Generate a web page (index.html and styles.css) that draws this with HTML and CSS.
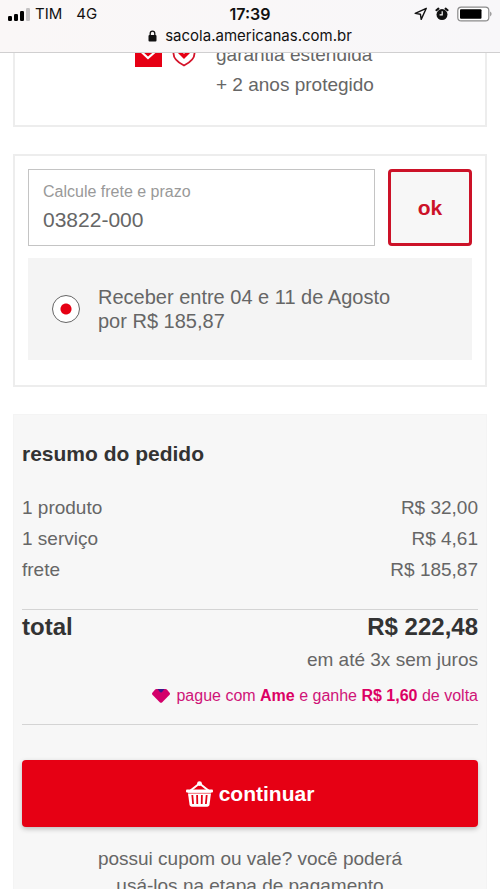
FILE: index.html
```html
<!DOCTYPE html>
<html lang="pt-BR">
<head>
<meta charset="utf-8">
<meta name="viewport" content="width=device-width, initial-scale=1">
<title>Sacola - Americanas</title>
<link rel="stylesheet" href="styles.css">
</head>
<body>
<header class="browser-bar">
  <div class="status">
    <div class="carrier">
      <svg width="23" height="13" viewBox="0 0 23 13" aria-hidden="true">
        <rect x="0" y="8" width="4" height="5" rx="1.2"/>
        <rect x="6" y="6" width="4" height="7" rx="1.2"/>
        <rect x="12" y="3" width="4" height="10" rx="1.2"/>
        <rect x="18" y="0" width="4" height="13" rx="1.2" fill="#c4c2c3"/>
      </svg>
      <span>TIM</span>
      <span class="network">4G</span>
    </div>
    <time class="clock">17:39</time>
    <div class="indicators">
      <svg width="14" height="14" viewBox="0 0 14 14" aria-hidden="true">
        <path d="M12.3 1.3 1.2 6.4l5.2.8.8 5.2z" fill="none" stroke="#111" stroke-width="1.4" stroke-linejoin="round"/>
      </svg>
      <svg width="14" height="14" viewBox="0 0 14 14" aria-hidden="true">
        <circle cx="7" cy="7.6" r="5.5" fill="#111"/>
        <path d="M1.4 3.2 3.4 1.6M10.6 1.6 12.6 3.2" stroke="#111" stroke-width="2" stroke-linecap="round"/>
        <path d="M7.2 4.2v3.6H4.6" fill="none" stroke="#fff" stroke-width="1.2"/>
      </svg>
      <svg width="36" height="16" viewBox="0 0 36 16" aria-hidden="true">
        <rect x="1.800" y="1.2" width="31" height="13.6" rx="3.4" fill="#fff" stroke="#8b8b8b" stroke-width="1.2"/>
        <rect x="4" y="3.3" width="21.5" height="9.4" rx="1" fill="#000"/>
        <path d="M34.2 5.6c1.8.8 1.8 4 0 4.8z" fill="#8b8b8b"/>
      </svg>
    </div>
  </div>
  <div class="address">
    <svg width="9" height="12" viewBox="0 0 9 12" aria-hidden="true">
      <rect x=".5" y="5" width="8" height="6.5" rx="1" fill="#111"/>
      <path d="M2.2 5.5V3.4a2.3 2.3 0 0 1 4.6 0v2.1" fill="none" stroke="#111" stroke-width="1.3"/>
    </svg>
    <span>sacola.americanas.com.br</span>
  </div>
</header>

<main class="page">
  <section class="card warranty">
    <div class="badges">
      <svg width="27" height="27" viewBox="0 0 27 27" aria-hidden="true">
        <rect width="27" height="27" fill="#e60014"/>
        <path d="M6 11.5 13 18 20.5 11.5" fill="none" stroke="#fff" stroke-width="2.2"/>
      </svg>
      <svg width="24" height="27" viewBox="0 0 24 27" aria-hidden="true">
        <path d="M12 1.5 22.5 5v8.5c0 5.500-4.5 9-10.5 12-6-3-10.500-6.500-10.500-12V5z" fill="#fff" stroke="#d4142a" stroke-width="1.8"/>
        <path d="M6.500 11 12 16.500 17.500 11" fill="none" stroke="#e60014" stroke-width="3.6"/>
      </svg>
    </div>
    <p class="warranty-text">garantia estendida<br>+ 2 anos protegido</p>
  </section>

  <section class="card shipping">
    <form class="zip-form">
      <div class="field">
        <label for="zip">Calcule frete e prazo</label>
        <input id="zip" type="text" inputmode="numeric" value="03822-000">
      </div>
      <button class="ok" type="button">ok</button>
    </form>
    <label class="option" for="delivery">
      <input id="delivery" type="radio" name="delivery" checked>
      <span>Receber entre 04 e 11 de Agosto<br>por R$ 185,87</span>
    </label>
  </section>

  <section class="summary">
    <h2>resumo do pedido</h2>
    <dl class="costs">
      <div><dt>1 produto</dt><dd>R$ 32,00</dd></div>
      <div><dt>1 serviço</dt><dd>R$ 4,61</dd></div>
      <div><dt>frete</dt><dd>R$ 185,87</dd></div>
    </dl>
    <div class="totals">
      <div class="total"><span>total</span><span>R$ 222,48</span></div>
      <p class="installments">em até 3x sem juros</p>
      <p class="cashback">
        <svg width="18" height="14" viewBox="0 0 18 14" aria-hidden="true">
          <path d="M4.500 0h9c.6 0 1 .2 1.400.6l2.700 3.200c.5.600.5 1.300 0 1.900L10 13.400c-.6.600-1.400.6-2 0L.4 5.700c-.5-.6-.5-1.300 0-1.900L3.100.6C3.500.2 3.900 0 4.500 0z" fill="#d3006a"/>
          <path d="M5.500 0h7L10.300 2.800c-.7.800-1.900.8-2.600 0z" fill="#3a1a8c"/>
        </svg>
        <span>pague com <b>Ame</b> e ganhe <b>R$ 1,60</b> de volta</span>
      </p>
    </div>
    <button class="continue" type="button">
      <svg width="27" height="26" viewBox="0 0 27 26" aria-hidden="true">
        <path d="M4.500 9.500 13.500 2.500 22.500 9.500" fill="none" stroke="#fff" stroke-width="2"/>
        <circle cx="13.5" cy="2.6" r="2.4" fill="#fff"/>
        <rect x="0" y="8.5" width="27" height="3" rx="1" fill="#fff"/>
        <path d="M1.800 11h23.400l-1.700 12.500c-.2 1.400-1 2.200-2.300 2.200H5.800c-1.300 0-2.100-.8-2.300-2.200z" fill="#fff"/>
        <path d="M6.300 14l.8 9M11.100 14l.2 9M15.900 14l-.2 9M20.700 14l-.8 9" stroke="#e60014" stroke-width="1.8"/>
        <path d="M2 12.300h23" stroke="#e60014" stroke-width=".6"/>
      </svg>
      <span>continuar</span>
    </button>
    <p class="coupon">possui cupom ou vale? você poderá<br>usá-los na etapa de pagamento</p>
  </section>
</main>
</body>
</html>
```

FILE: styles.css
```css
* {
  box-sizing: border-box;
}

body {
  margin: 0;
  height: 100vh;
  overflow: hidden;
  background: #fff;
  color: #666;
  font: 19px/24px "Liberation Sans", Arial, sans-serif;
}

h2, p, dl, dd {
  margin: 0;
}

svg {
  flex: none;
}

button, input {
  font-family: inherit;
}

.browser-bar {
  position: fixed;
  top: 0;
  left: 0;
  right: 0;
  padding: 4px 8px 6px;
  border-bottom: 1px solid #d0cfd0;
  background: linear-gradient(90deg, #faf7f7, #f8f7f9);
  color: #111;
  font: 15px/20px Inter, sans-serif;
}

.status {
  display: grid;
  grid-template-columns: 1fr auto 1fr;
  align-items: center;
}

.carrier, .indicators {
  display: flex;
  align-items: center;
  gap: 4px;
}

.network {
  margin-left: 10px;
}

.clock {
  font-size: 16px;
  font-weight: 600;
}

.indicators {
  justify-content: flex-end;
  gap: 7px;
}

.address {
  display: flex;
  align-items: center;
  justify-content: center;
  gap: 8px;
  padding-top: 2px;
}

.page {
  padding: 0 13px;
}

.card {
  margin-bottom: 27px;
  border: 2px solid #ededed;
}

.warranty {
  display: flex;
  align-items: flex-start;
  gap: 20px;
  padding: 38px 24px 25px 120px;
}

.badges {
  display: flex;
  gap: 10px;
}

.warranty-text {
  line-height: 30px;
}

.shipping {
  padding: 13px 13px 25px;
}

.zip-form {
  display: flex;
  gap: 13px;
  margin-bottom: 12px;
}

.field {
  flex: 1;
  min-width: 0;
  padding: 10px 14px 9px;
  border: 1px solid #c4c4c4;
}

.field label {
  display: block;
  color: #999;
  font-size: 16px;
}

.field input {
  display: block;
  width: 100%;
  height: 32px;
  padding: 0;
  border: 0;
  outline: 0;
  background: none;
  color: #666;
  font-size: 21px;
}

.ok {
  width: 84px;
  border: 3px solid #cc1228;
  border-radius: 4px;
  background: #f7f7f7;
  color: #cc1228;
  font-size: 21px;
  font-weight: bold;
}

.option {
  display: flex;
  align-items: center;
  gap: 18px;
  padding: 27px 24px;
  background: #f4f4f4;
  font-size: 20px;
}

.option input {
  appearance: none;
  flex: none;
  width: 28px;
  height: 28px;
  margin: 0;
  border: 1px solid #666;
  border-radius: 50%;
  background: #fff;
}

.option input:checked {
  background: radial-gradient(circle, #e60014 5px, #fff 6px);
}

.summary {
  padding: 27px 8px;
  border: 1px solid #f4f4f4;
  background: #f7f7f7;
}

.summary h2 {
  margin-bottom: 26px;
  color: #333;
  font-size: 21px;
  line-height: 24px;
}

.costs {
  padding-bottom: 24px;
  line-height: 31px;
}

.costs div, .total {
  display: flex;
  justify-content: space-between;
}

.totals {
  padding: 2px 0 16px;
  border-top: 1px solid #d4d4d4;
  border-bottom: 1px solid #d4d4d4;
  text-align: right;
}

.total {
  color: #333;
  font-size: 24px;
  font-weight: bold;
  line-height: 30px;
}

.installments {
  padding: 6px 0 12px;
}

.cashback {
  display: flex;
  align-items: center;
  justify-content: flex-end;
  gap: 6px;
  color: #cf1478;
  font-size: 16px;
}

.cashback b {
  color: #dc0064;
}

.continue {
  display: flex;
  align-items: center;
  justify-content: center;
  gap: 6px;
  width: 100%;
  height: 67px;
  margin: 35px 0 18px;
  border: 0;
  border-radius: 4px;
  background: #e60014;
  box-shadow: 0 2px 5px #bbb;
  color: #fff;
  font-size: 21px;
  font-weight: bold;
}

.coupon {
  line-height: 27px;
  text-align: center;
}
```
